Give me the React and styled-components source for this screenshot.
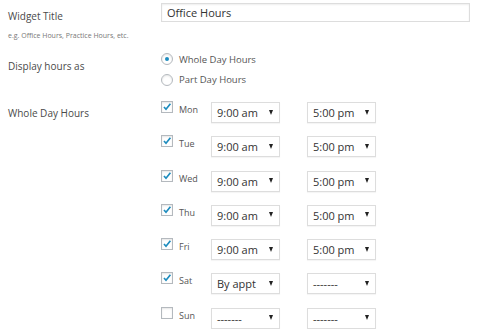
import React from 'react';
import styled, { createGlobalStyle } from 'styled-components';

const GlobalStyle = createGlobalStyle`
  body {
    margin: 0;
    background: #fff;
    font-family: "Open Sans", "Liberation Sans", sans-serif;
    color: #444;
  }
`;

const Page = styled.div`
  padding: 3px 10px 0 8px;
  width: 480px;
  box-sizing: border-box;
`;

const Field = styled.div`
  display: flex;
  margin-top: ${p => p.top || 0}px;
`;

const Label = styled.div`
  width: 153px;
  flex: none;
  font-size: 10px;
  line-height: 14px;
  color: #4a4a4a;
  padding-top: ${p => p.pad || 0}px;
`;

const Hint = styled.div`
  margin-top: 8px;
  font-size: 7px;
  line-height: 10px;
  color: #777;
`;

const TextInput = styled.div`
  width: 309px;
  height: 19px;
  box-sizing: border-box;
  border: 1px solid #ddd;
  box-shadow: inset 0 1px 2px rgba(0, 0, 0, 0.07);
  padding-left: 5px;
  font-size: 11px;
  line-height: 17px;
  color: #333;
`;

const RadioList = styled.div`
  display: flex;
  flex-direction: column;
`;

const RadioOption = styled.div`
  display: flex;
  align-items: center;
  height: 20.5px;
  font-size: 9.5px;
  color: #555;
  gap: 6px;
`;

const Radio = styled.span`
  width: 12px;
  height: 12px;
  box-sizing: border-box;
  border: 1px solid #b4b9be;
  border-radius: 50%;
  box-shadow: inset 0 1px 2px rgba(0, 0, 0, 0.1);
  display: flex;
  align-items: center;
  justify-content: center;
  &::after {
    content: '';
    display: ${p => (p.checked ? 'block' : 'none')};
    width: 4px;
    height: 4px;
    border-radius: 50%;
    background: #1e8cbe;
  }
`;

const DayList = styled.div`
  display: flex;
  flex-direction: column;
  gap: 12.3px;
`;

const DayRow = styled.div`
  display: flex;
  align-items: flex-start;
  height: 22px;
`;

const Check = styled.span`
  width: 12px;
  height: 12px;
  flex: none;
  box-sizing: border-box;
  border: 1px solid #b4b9be;
  box-shadow: inset 0 1px 2px rgba(0, 0, 0, 0.1);
  position: relative;
  svg {
    position: absolute;
    left: 0;
    top: 0;
  }
`;

const DayName = styled.span`
  width: 32px;
  margin-left: 6px;
  margin-top: 3px;
  font-size: 9px;
  line-height: 12px;
  color: #555;
`;

const Select = styled.div`
  width: 69px;
  height: 21px;
  margin-top: 1px;
  margin-right: ${p => p.gap || 0}px;
  box-sizing: border-box;
  border: 1px solid #ddd;
  box-shadow: 0 1px 1px rgba(0, 0, 0, 0.04);
  display: flex;
  align-items: center;
  justify-content: space-between;
  padding: 0 6px 0 5px;
  font-size: 11px;
  color: #333;
`;

const Arrow = styled.i`
  width: 0;
  height: 0;
  border-left: 2.5px solid transparent;
  border-right: 2.5px solid transparent;
  border-top: 5px solid #222;
  margin-bottom: 1px;
`;

const CheckMark = () => (
  <svg width="10" height="10" viewBox="0 0 10 10">
    <path d="M2 5 L4 7.2 L8.4 1.8" fill="none" stroke="#1e8cbe" strokeWidth="1.7" />
  </svg>
);

const days = [
  { name: 'Mon', on: true, from: '9:00 am', to: '5:00 pm' },
  { name: 'Tue', on: true, from: '9:00 am', to: '5:00 pm' },
  { name: 'Wed', on: true, from: '9:00 am', to: '5:00 pm' },
  { name: 'Thu', on: true, from: '9:00 am', to: '5:00 pm' },
  { name: 'Fri', on: true, from: '9:00 am', to: '5:00 pm' },
  { name: 'Sat', on: true, from: 'By appt', to: '-------' },
  { name: 'Sun', on: false, from: '-------', to: '-------' },
];

export default function App() {
  return (
    <Page>
      <GlobalStyle />
      <Field>
        <Label pad={6}>Widget Title</Label>
        <TextInput>Office Hours</TextInput>
      </Field>
      <Hint>e.g. Office Hours, Practice Hours, etc.</Hint>
      <Field top={8}>
        <Label pad={10}>Display hours as</Label>
        <RadioList>
          <RadioOption><Radio checked />Whole Day Hours</RadioOption>
          <RadioOption><Radio />Part Day Hours</RadioOption>
        </RadioList>
      </Field>
      <Field top={11}>
        <Label pad={5}>Whole Day Hours</Label>
        <DayList>
          {days.map(d => (
            <DayRow key={d.name}>
              <Check>{d.on && <CheckMark />}</Check>
              <DayName>{d.name}</DayName>
              <Select gap={27}>{d.from}<Arrow /></Select>
              <Select>{d.to}<Arrow /></Select>
            </DayRow>
          ))}
        </DayList>
      </Field>
    </Page>
  );
}
